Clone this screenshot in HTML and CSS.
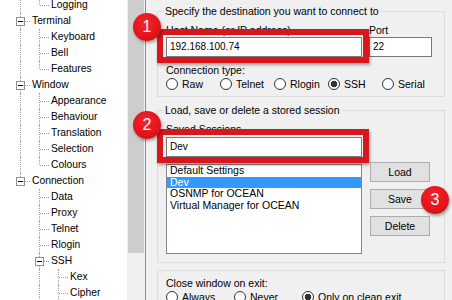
FILE: index.html
```html
<!DOCTYPE html>
<html>
    <head>
        <title>PuTTY Configuration</title>
        <link rel="stylesheet" href="styles.css">
    </head>
    <body>
        <div class="dialog">
            <div class="tree">
                <div class="rows">
                    <div class="row"><span class="g pipe"></span><span class="g elbow"></span><span class="label">Logging</span></div>
                    <div class="row"><span class="g tee"><i class="box"></i></span><span class="label">Terminal</span></div>
                    <div class="row"><span class="g pipe"></span><span class="g tee"></span><span class="label">Keyboard</span></div>
                    <div class="row"><span class="g pipe"></span><span class="g tee"></span><span class="label">Bell</span></div>
                    <div class="row"><span class="g pipe"></span><span class="g elbow"></span><span class="label">Features</span></div>
                    <div class="row"><span class="g tee"><i class="box"></i></span><span class="label">Window</span></div>
                    <div class="row"><span class="g pipe"></span><span class="g tee"></span><span class="label">Appearance</span></div>
                    <div class="row"><span class="g pipe"></span><span class="g tee"></span><span class="label">Behaviour</span></div>
                    <div class="row"><span class="g pipe"></span><span class="g tee"></span><span class="label">Translation</span></div>
                    <div class="row"><span class="g pipe"></span><span class="g tee"></span><span class="label">Selection</span></div>
                    <div class="row"><span class="g pipe"></span><span class="g elbow"></span><span class="label">Colours</span></div>
                    <div class="row"><span class="g elbow"><i class="box"></i></span><span class="label">Connection</span></div>
                    <div class="row"><span class="g"></span><span class="g tee"></span><span class="label">Data</span></div>
                    <div class="row"><span class="g"></span><span class="g tee"></span><span class="label">Proxy</span></div>
                    <div class="row"><span class="g"></span><span class="g tee"></span><span class="label">Telnet</span></div>
                    <div class="row"><span class="g"></span><span class="g tee"></span><span class="label">Rlogin</span></div>
                    <div class="row"><span class="g"></span><span class="g tee"><i class="box"></i></span><span class="label">SSH</span></div>
                    <div class="row"><span class="g"></span><span class="g pipe"></span><span class="g tee"></span><span class="label">Kex</span></div>
                    <div class="row"><span class="g"></span><span class="g pipe"></span><span class="g tee"></span><span class="label">Cipher</span></div>
                </div>
            </div>
            <div class="scrollbar"><div class="thumb"></div></div>
            <div class="panel">
                <div class="group first">
                    <div class="legend">Specify the destination you want to connect to</div>
                    <div class="host-row">
                        <div>
                            <div class="caption">Host Name (or IP address)</div>
                            <div class="marked">
                                <div class="edit">192.168.100.74</div>
                                <div class="mark"></div>
                                <span class="badge b1">1</span>
                            </div>
                        </div>
                        <div>
                            <div class="caption">Port</div>
                            <div class="edit">22</div>
                        </div>
                    </div>
                    <div class="caption type">Connection type:</div>
                    <div class="radios five">
                        <span class="radio"><i class="dot"></i>Raw</span>
                        <span class="radio"><i class="dot"></i>Telnet</span>
                        <span class="radio"><i class="dot"></i>Rlogin</span>
                        <span class="radio"><i class="dot on"></i>SSH</span>
                        <span class="radio"><i class="dot"></i>Serial</span>
                    </div>
                </div>
                <div class="group second">
                    <div class="legend">Load, save or delete a stored session</div>
                    <div class="sessions">
                        <div class="caption">Saved Sessions</div>
                        <div></div>
                        <div class="marked">
                            <div class="edit">Dev</div>
                            <div class="mark"></div>
                            <span class="badge b2">2</span>
                        </div>
                        <div></div>
                        <div class="list">
                            <div class="item">Default Settings</div>
                            <div class="item selected">Dev</div>
                            <div class="item">OSNMP for OCEAN</div>
                            <div class="item">Virtual Manager for OCEAN</div>
                        </div>
                        <div class="buttons">
                            <div class="btn">Load</div>
                            <div class="btn save">Save<span class="badge b3">3</span></div>
                            <div class="btn">Delete</div>
                        </div>
                    </div>
                </div>
                <div class="group third">
                    <div class="caption">Close window on exit:</div>
                    <div class="radios three">
                        <span class="radio"><i class="dot"></i>Always</span>
                        <span class="radio"><i class="dot"></i>Never</span>
                        <span class="radio"><i class="dot on"></i>Only on clean exit</span>
                    </div>
                </div>
            </div>
        </div>
    </body>
</html>
```

FILE: styles.css
```css
body {
    margin: 0;
    background-color: #f0f0f0;
    color: #000;
    font-family: "Liberation Sans", Arial, sans-serif;
    font-size: 10.5px;
}
.dialog {
    display: flex;
    height: 300px;
    overflow: hidden;
}

/* tree view */
.tree {
    width: 127px;
    flex: none;
    background-color: #fff;
    overflow: hidden;
}
.rows {
    margin-top: -3px;
}
.row {
    display: flex;
    height: 16px;
    padding-left: 11px;
}
.g {
    position: relative;
    width: 19px;
    height: 16px;
    flex: none;
}
.pipe::before, .tee::before, .elbow::before {
    content: "";
    position: absolute;
    left: 9px;
    top: 0;
    bottom: 0;
    border-left: 1px dotted #a0a0a0;
}
.elbow::before {
    bottom: 8px;
}
.tee::after, .elbow::after {
    content: "";
    position: absolute;
    left: 10px;
    top: 8px;
    width: 9px;
    border-top: 1px dotted #a0a0a0;
}
.box {
    position: absolute;
    z-index: 1;
    left: 5px;
    top: 4px;
    width: 7px;
    height: 7px;
    border: 1px solid #919191;
    background-color: #fff;
}
.box::after {
    content: "";
    position: absolute;
    left: 1px;
    top: 3px;
    width: 5px;
    height: 1px;
    background-color: #000;
}
.label {
    padding-left: 2px;
    font-size: 10.3px;
    line-height: 16px;
    white-space: nowrap;
}
.scrollbar {
    width: 18px;
    flex: none;
    background-color: #f0f0f0;
}
.thumb {
    height: 253px;
    margin: 0 1px;
    background-color: #cdcdcd;
}

/* right side */
.panel {
    flex: 1;
    border-left: 1px solid #8c8c8c;
    padding: 0 9px 0 11px;
}
.group {
    border: 1px solid #dcdcdc;
    padding: 0 8px 6px 8px;
}
.group.first {
    margin-top: 11px;
}
.group.second {
    margin-top: 13px;
    padding-bottom: 8px;
}
.group.third {
    margin-top: 7px;
    padding-top: 6px;
}
.legend {
    width: max-content;
    margin: -7px 0 0 -2px;
    padding: 0 1px;
    line-height: 12px;
    background-color: #f0f0f0;
}
.caption {
    line-height: 12px;
    white-space: nowrap;
}
.host-row {
    display: grid;
    grid-template-columns: 196px 63px;
    column-gap: 7px;
    margin-top: 7px;
}
.host-row .edit {
    margin-top: 1px;
}
.caption.type {
    margin-top: 7px;
}
.edit {
    box-sizing: border-box;
    height: 20px;
    border: 1px solid #7a7a7a;
    background-color: #fff;
    padding: 0 3px;
    font-size: 10px;
    line-height: 18px;
}
.marked {
    position: relative;
}
.mark {
    position: absolute;
    left: -9px;
    right: -7px;
    top: -8px;
    bottom: -6px;
    border: 6px solid #d8161e;
    box-shadow: 1px 2px 3px rgba(0, 0, 0, 0.35);
}
.badge {
    position: absolute;
    z-index: 2;
    width: 28px;
    height: 28px;
    border-radius: 50%;
    background: radial-gradient(circle at 45% 35%, #f3262c 0, #e2131b 60%, #b50d12 100%);
    box-shadow: 1px 2px 3px rgba(0, 0, 0, 0.35);
    color: #fff;
    font-size: 16px;
    line-height: 28px;
    text-align: center;
}
.b1 {
    left: -33px;
    top: -24px;
}
.b2 {
    left: -33px;
    top: -26px;
}
.b3 {
    left: 50px;
    top: -4px;
}
.radios {
    display: grid;
    margin-top: 1px;
}
.radios.five {
    grid-template-columns: repeat(5, 54px);
}
.radios.three {
    grid-template-columns: repeat(3, 68px);
}
.radio {
    display: flex;
    align-items: center;
    gap: 4px;
    height: 13px;
    white-space: nowrap;
}
.dot {
    box-sizing: border-box;
    width: 12px;
    height: 12px;
    flex: none;
    border: 1px solid #333;
    border-radius: 50%;
    background-color: #fff;
}
.dot.on {
    background: radial-gradient(circle, #333 0, #333 3px, #fff 3.6px);
}
.sessions {
    display: grid;
    grid-template-columns: 196px 60px;
    column-gap: 8px;
    margin-top: 7px;
}
.sessions .marked {
    margin-top: 2px;
}
.list {
    box-sizing: border-box;
    height: 90px;
    margin-top: 7px;
    border: 1px solid #828790;
    background-color: #fff;
}
.item {
    height: 11.6px;
    padding-left: 3px;
    line-height: 11.6px;
    white-space: nowrap;
}
.item.selected {
    background-color: #3399ff;
    color: #fff;
}
.buttons {
    display: flex;
    flex-direction: column;
    gap: 7px;
    margin-top: 5px;
}
.btn {
    position: relative;
    box-sizing: border-box;
    height: 20px;
    border: 1px solid #adadad;
    background-color: #e1e1e1;
    line-height: 18px;
    text-align: center;
}
```
